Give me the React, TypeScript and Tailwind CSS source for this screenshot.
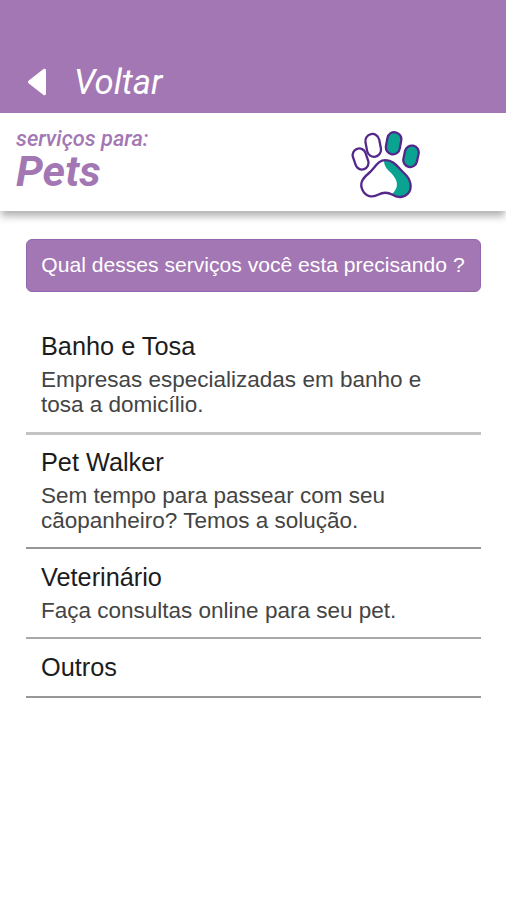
import React from 'react';

interface Service {
  title: string;
  description?: string;
  rowClass: string;
}

const services: Service[] = [
  {
    title: 'Banho e Tosa',
    description: 'Empresas especializadas em banho e tosa a domicílio.',
    rowClass: 'h-[116px] border-b-[3px] border-[#c4c4c4] pt-[12px]',
  },
  {
    title: 'Pet Walker',
    description: 'Sem tempo para passear com seu cãopanheiro? Temos a solução.',
    rowClass: 'h-[114px] border-b-2 border-[#979797] pt-[11.5px]',
  },
  {
    title: 'Veterinário',
    description: 'Faça consultas online para seu pet.',
    rowClass: 'h-[90px] border-b-2 border-[#a9a9a9] pt-[12.5px]',
  },
  { title: 'Outros', rowClass: 'h-[59px] border-b-2 border-[#979797] pt-[13px]' },
];

const PawIcon: React.FC = () => (
  <svg width="70" height="70" viewBox="0 0 70 70" fill="none" stroke="#54278a" strokeWidth="2.3">
    <rect x="-6.6" y="-10.8" width="13.2" height="21.6" rx="6.6" transform="translate(10.6 28) rotate(-19)" />
    <rect x="-7" y="-11.5" width="14" height="23" rx="7" transform="translate(23.2 14.4) rotate(-11)" />
    <rect x="-7" y="-11.2" width="14" height="22.4" rx="7" fill="#0aa391" transform="translate(43.6 12.3) rotate(10)" />
    <rect x="-6.9" y="-10.8" width="13.8" height="21.6" rx="6.9" fill="#0aa391" transform="translate(61 25.3) rotate(12)" />
    <path
      d="M34 29.5C34 39 42 40.5 45.5 48C48.5 54 46.5 59 42 63C47 66.8 54 67.3 58 62.5C62.5 57 60 48 54 42C47.5 35.5 43 28.5 34 29.5Z"
      fill="#0aa391"
      stroke="none"
    />
    <path d="M35.5 29.2C27.5 29.2 25 37 18.5 42.5C12 48 9.5 52.5 12.5 59C15.5 65.5 22.5 67 28 63.8C32.5 61.4 38 61.2 42 63.6C47.5 67 54 67 58 62.5C63 57 60.5 48 54.5 42.5C47.5 36 44 29.2 35.5 29.2Z" />
  </svg>
);

const App: React.FC = () => {
  return (
    <div className="min-h-[900px] w-full bg-white font-['Liberation_Sans',Arial,sans-serif]">
      <header className="flex h-[113px] items-end bg-[#a377b4] pb-[11px] pl-[28px] font-[Roboto,sans-serif]">
        <button className="flex items-center text-white">
          <svg width="18" height="28" viewBox="0 0 18 28" fill="currentColor">
            <path d="M.8 12.4 15.5 1Q18 0 18 2.5V25.5Q18 28 15.5 27L.8 15.6Q-.8 14 .8 12.4Z" />
          </svg>
          <span className="ml-[28px] text-[34.6px] leading-[40px] italic">Voltar</span>
        </button>
      </header>

      <section className="flex h-[98px] justify-between bg-white pr-[86px] pl-[16px] font-[Roboto,sans-serif] text-[#a377b4] shadow-[0_6px_8px_-1px_rgba(0,0,0,0.32)]">
        <div className="pt-[14px] italic">
          <p className="text-[21.8px] leading-[24px] font-medium">serviços para:</p>
          <h1 className="text-[43px] leading-[40px] font-bold">Pets</h1>
        </div>
        <div className="pt-[18px]">
          <PawIcon />
        </div>
      </section>

      <main className="px-[25.5px] pt-[28px]">
        <div className="flex h-[53px] items-center justify-center rounded-[6px] border border-[#9267ae] bg-[#a377b4] pb-px text-[21.1px] whitespace-nowrap text-white">
          Qual desses serviços você esta precisando ?
        </div>

        <ul className="mt-[27px]">
          {services.map((service) => (
            <li key={service.title} className={service.rowClass}>
              <div className="px-[15.5px]">
                <h2 className="text-[25.3px] leading-[30px] text-[#1c1c1c]">{service.title}</h2>
                {service.description && (
                  <p className="mt-[6px] w-[400px] text-[22.5px] leading-[25px] text-[#444]">
                    {service.description}
                  </p>
                )}
              </div>
            </li>
          ))}
        </ul>
      </main>
    </div>
  );
};

export default App;
